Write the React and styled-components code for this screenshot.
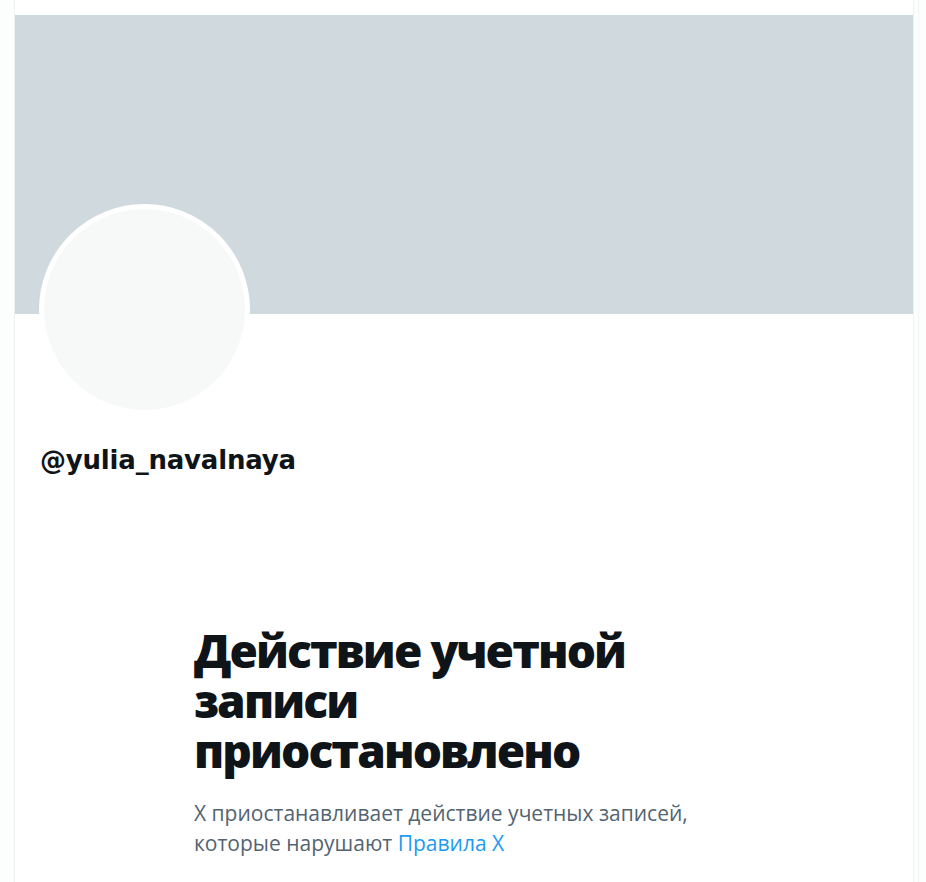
import React from "react";
import styled, { createGlobalStyle } from "styled-components";

const GlobalStyle = createGlobalStyle`
  html, body {
    margin: 0;
    padding: 0;
    background: #fcfdfd;
  }
  body {
    font-family: "Open Sans", "Noto Sans", "Liberation Sans", sans-serif;
    color: #0f1419;
  }
`;

const Page = styled.div`
  width: 919px;
  height: 882px;
  border-right: 1px solid #f2f4f5;
  box-sizing: border-box;
  overflow: hidden;
`;

const Column = styled.div`
  margin-left: 14px;
  width: 900px;
  height: 100%;
  box-sizing: border-box;
  padding-top: 15px;
  border-left: 1px solid #eef1f2;
  border-right: 1px solid #eef1f2;
  background: #ffffff;
`;

const Banner = styled.div`
  height: 299px;
  background-color: #cfd9de;
`;

const AvatarRow = styled.div`
  display: flex;
  padding-left: 24px;
  margin-top: -110px;
`;

const Avatar = styled.div`
  width: 201px;
  height: 201px;
  border-radius: 50%;
  border: 5px solid #ffffff;
  background-color: #f7f9f9;
`;

const Handle = styled.div`
  margin: 29px 0 0 25px;
  font-family: "DejaVu Sans", "Open Sans", sans-serif;
  font-size: 26px;
  font-weight: 700;
  line-height: 32px;
  letter-spacing: -0.2px;
  color: #0f1419;
`;

const Message = styled.div`
  padding: 149px 0 0 179px;
  max-width: 520px;
`;

const Title = styled.h1`
  margin: 0;
  font-size: 46px;
  font-weight: 800;
  line-height: 50px;
  letter-spacing: -1.9px;
  color: #0f1419;
`;

const Text = styled.p`
  margin: 23px 0 0;
  font-size: 21px;
  line-height: 30px;
  letter-spacing: 0;
  color: #536471;
`;

const RulesLink = styled.a`
  color: #1d9bf0;
  text-decoration: none;
`;

const App = () => {
  return (
    <>
      <GlobalStyle />
      <Page>
        <Column>
          <Banner />
          <AvatarRow>
            <Avatar />
          </AvatarRow>
          <Handle>@yulia_navalnaya</Handle>
          <Message>
            <Title>Действие учетной записи приостановлено</Title>
            <Text>
              X приостанавливает действие учетных записей, которые нарушают{" "}
              <RulesLink href="#">Правила X</RulesLink>
            </Text>
          </Message>
        </Column>
      </Page>
    </>
  );
};

export default App;
